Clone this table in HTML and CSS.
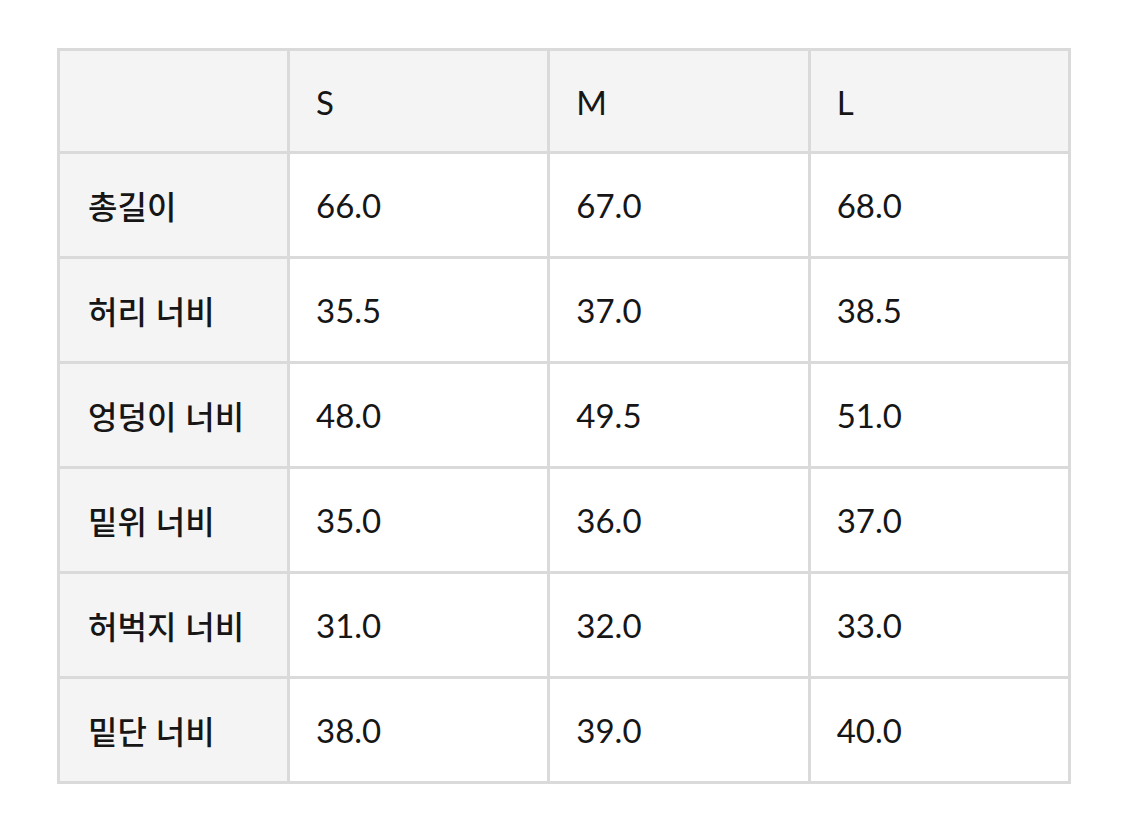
FILE: index.html
```html
<!DOCTYPE html>
<html lang="ko">
<head>
<meta charset="utf-8">
<link rel="stylesheet" href="styles.css">
</head>
<body>
<table class="size-table">
  <colgroup>
    <col class="c-label"><col class="c-val"><col class="c-val"><col class="c-val">
  </colgroup>
  <thead>
    <tr><th class="corner"></th><th>S</th><th>M</th><th>L</th></tr>
  </thead>
  <tbody>
    <tr><th>총길이</th><td>66.0</td><td>67.0</td><td>68.0</td></tr>
    <tr><th>허리 너비</th><td>35.5</td><td>37.0</td><td>38.5</td></tr>
    <tr><th>엉덩이 너비</th><td>48.0</td><td>49.5</td><td>51.0</td></tr>
    <tr><th>밑위 너비</th><td>35.0</td><td>36.0</td><td>37.0</td></tr>
    <tr><th>허벅지 너비</th><td>31.0</td><td>32.0</td><td>33.0</td></tr>
    <tr><th>밑단 너비</th><td>38.0</td><td>39.0</td><td>40.0</td></tr>
  </tbody>
</table>
</body>
</html>
```
FILE: styles.css
```css
html, body {
  margin: 0;
  padding: 0;
  background: #ffffff;
}
body {
  padding: 48px 0 0 57px;
  font-family: "Lato", "Noto Sans CJK KR", sans-serif;
  color: #161616;
}
.size-table {
  border-collapse: collapse;
  width: 1014px;
  table-layout: fixed;
}
.c-label { width: 230px; }
.size-table th,
.size-table td {
  border: 3px solid #dadada;
  height: 105px;
  padding: 0 0 0 26px;
  text-align: left;
  vertical-align: middle;
  font-size: 33px;
  font-weight: 400;
  box-sizing: border-box;
}
.size-table thead th {
  height: 103px;
  background: #f4f4f4;
  font-family: "Lato", sans-serif;
  font-weight: 400;
  padding-top: 2px;
}
.size-table tbody th {
  background: #f4f4f4;
  font-family: "Noto Sans CJK KR", sans-serif;
  font-weight: 500;
  font-size: 32px;
  padding-left: 28px;
}
```
